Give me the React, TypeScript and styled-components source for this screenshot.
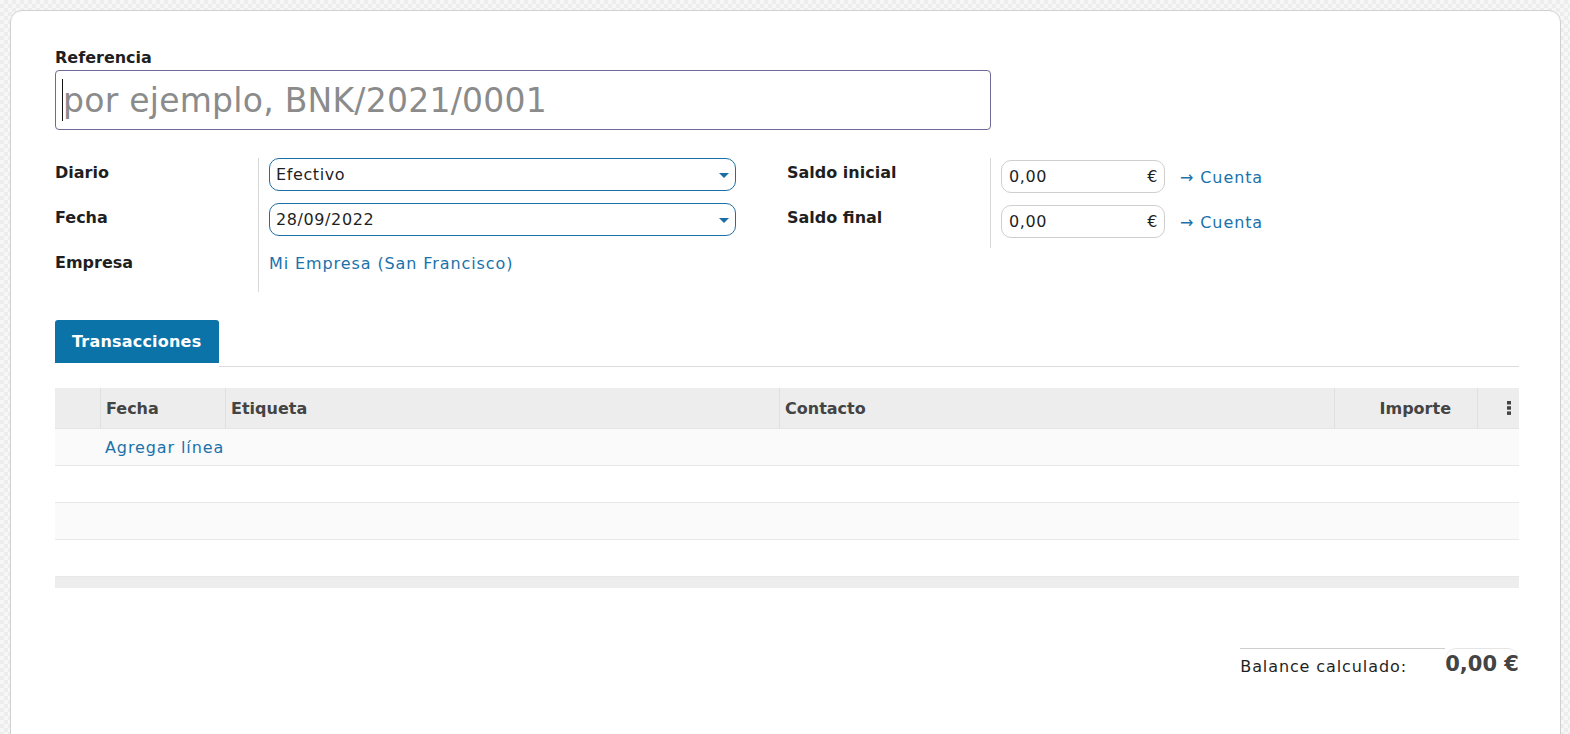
import React from 'react';
import styled, { createGlobalStyle } from 'styled-components';

const GlobalStyle = createGlobalStyle`
  html, body {
    margin: 0;
    padding: 0;
  }
  body {
    font-family: 'DejaVu Sans', 'Noto Sans', sans-serif;
    color: #1f1f1f;
    background-color: #f4f4f4;
    background-image: repeating-conic-gradient(#ededed 0% 25%, #f7f7f7 0% 50%);
    background-size: 8px 8px;
    height: 734px;
    overflow: hidden;
  }
`;

const Page = styled.div`
  padding: 10px 9px 0 10px;
`;

const Sheet = styled.div`
  background: #fff;
  border: 1px solid #cfcfd4;
  border-radius: 12px;
  height: 760px;
  padding: 36px 41px 0 44px;
  box-sizing: border-box;
`;

const TitleLabel = styled.div`
  font-size: 16px;
  font-weight: 700;
  line-height: 22px;
  color: #1f1f1f;
`;

const TitleInput = styled.div`
  margin-top: 1px;
  width: 936px;
  height: 60px;
  border: 1px solid #6d6a99;
  border-radius: 4px;
  box-sizing: border-box;
  display: flex;
  align-items: center;
  padding-left: 6px;
  font-size: 33px;
  color: #8b8b8b;
  letter-spacing: 0.25px;
`;

const Caret = styled.span`
  display: inline-block;
  width: 1px;
  height: 42px;
  background: #111;
`;

const Groups = styled.div`
  display: grid;
  grid-template-columns: 732px 1fr;
  margin-top: 28px;
`;

const Group = styled.div`
  display: grid;
  grid-template-columns: 204px 1fr;
  grid-auto-rows: 45px;
  align-content: start;
`;

const Label = styled.div<{ last?: boolean }>`
  border-right: 1px solid #d8d8d8;
  font-size: 16px;
  font-weight: 700;
  line-height: 29px;
  height: ${({ last }) => (last ? '44px' : '45px')};
  box-sizing: border-box;
`;

const Field = styled.div`
  padding-left: 10px;
  display: flex;
  align-items: flex-start;
  gap: 15px;
`;

const SelectBox = styled.div`
  width: 467px;
  height: 33px;
  border: 1px solid #1b6fa5;
  border-radius: 10px;
  box-sizing: border-box;
  display: flex;
  align-items: center;
  justify-content: space-between;
  padding: 0 6px;
  font-size: 16px;
  letter-spacing: 0.6px;
  color: #1f1f1f;
`;

const Arrow = styled.span`
  width: 0;
  height: 0;
  border-left: 5px solid transparent;
  border-right: 5px solid transparent;
  border-top: 5px solid #1a6ea3;
  margin-top: 2px;
`;

const MoneyBox = styled.div`
  width: 164px;
  height: 33px;
  margin-top: 2px;
  border: 1px solid #cfcfcf;
  border-radius: 10px;
  box-sizing: border-box;
  display: flex;
  align-items: center;
  justify-content: space-between;
  padding: 0 6px 0 7px;
  font-size: 16px;
  letter-spacing: 0.6px;
  color: #1f1f1f;
`;

const Link = styled.a<{ tall?: boolean }>`
  color: #1a72ab;
  font-size: 16px;
  letter-spacing: 0.9px;
  line-height: ${({ tall }) => (tall ? '40px' : '31px')};
  text-decoration: none;
  cursor: pointer;
  white-space: nowrap;
`;

const TabBar = styled.div`
  display: flex;
  margin-top: 27px;
`;

const Tab = styled.div`
  height: 43px;
  padding: 0 18px 0 17px;
  background: #0c73a9;
  color: #fff;
  font-size: 16px;
  font-weight: 700;
  letter-spacing: 0.2px;
  display: flex;
  align-items: center;
  border-radius: 3px 3px 0 0;
`;

const TabRest = styled.div`
  flex: 1;
  height: 46px;
  border-bottom: 1px solid #dcdcdc;
`;

const Table = styled.div`
  margin-top: 21px;
`;

const HeaderRow = styled.div`
  display: grid;
  grid-template-columns: 45px 125px 554px 555px 143px 40px;
  height: 41px;
  background: #ededed;
  border-bottom: 1px solid #e6e6e6;
  box-sizing: border-box;
`;

const HeaderCell = styled.div<{ right?: boolean; sep?: boolean }>`
  display: flex;
  align-items: center;
  justify-content: ${({ right }) => (right ? 'flex-end' : 'flex-start')};
  padding: 0 ${({ right }) => (right ? '26px' : '6px')} 0 5px;
  border-left: ${({ sep }) => (sep ? '1px solid #e0e0e0' : 'none')};
  font-size: 16px;
  font-weight: 700;
  color: #444;
  white-space: nowrap;
`;

const Kebab = styled.div`
  display: flex;
  align-items: center;
  justify-content: flex-end;
  padding-right: 6px;
  border-left: 1px solid #e0e0e0;
`;

const BodyRow = styled.div<{ shade?: boolean }>`
  height: 37px;
  background: ${({ shade }) => (shade ? '#fafafa' : '#fff')};
  border-bottom: 1px solid #e8e8e8;
  box-sizing: border-box;
  display: flex;
  align-items: center;
  padding-left: 50px;
`;

const TableFoot = styled.div`
  height: 11px;
  background: #ededed;
`;

const Summary = styled.div`
  display: flex;
  justify-content: flex-end;
  margin-top: 60px;
`;

const SummaryLabel = styled.div`
  width: 205px;
  border-top: 1px solid #cfcfcf;
  padding-top: 8px;
  font-size: 16px;
  letter-spacing: 0.9px;
  color: #1f1f1f;
  white-space: nowrap;
`;

const SummaryValue = styled.div`
  border-top: 1px solid #e4e4e4;
  border-radius: 12px 12px 0 0;
  padding-top: 3px;
  font-size: 21px;
  font-weight: 700;
  color: #444;
  white-space: nowrap;
`;

const App: React.FC = () => {
  return (
    <Page>
      <GlobalStyle />
      <Sheet>
        <TitleLabel>Referencia</TitleLabel>
        <TitleInput>
          <Caret />
          por ejemplo, BNK/2021/0001
        </TitleInput>

        <Groups>
          <Group>
            <Label>Diario</Label>
            <Field>
              <SelectBox>
                Efectivo
                <Arrow />
              </SelectBox>
            </Field>
            <Label>Fecha</Label>
            <Field>
              <SelectBox>
                28/09/2022
                <Arrow />
              </SelectBox>
            </Field>
            <Label last>Empresa</Label>
            <Field>
              <Link>Mi Empresa (San Francisco)</Link>
            </Field>
          </Group>
          <Group>
            <Label>Saldo inicial</Label>
            <Field>
              <MoneyBox>
                0,00<span>€</span>
              </MoneyBox>
              <Link tall>→ Cuenta</Link>
            </Field>
            <Label>Saldo final</Label>
            <Field>
              <MoneyBox>
                0,00<span>€</span>
              </MoneyBox>
              <Link tall>→ Cuenta</Link>
            </Field>
          </Group>
        </Groups>

        <TabBar>
          <Tab>Transacciones</Tab>
          <TabRest />
        </TabBar>

        <Table>
          <HeaderRow>
            <HeaderCell />
            <HeaderCell sep>Fecha</HeaderCell>
            <HeaderCell sep>Etiqueta</HeaderCell>
            <HeaderCell sep>Contacto</HeaderCell>
            <HeaderCell sep right>Importe</HeaderCell>
            <Kebab>
              <svg width="4" height="14" viewBox="0 0 4 14">
                <rect x="0" y="0" width="4" height="3.5" fill="#444" />
                <rect x="0" y="5.2" width="4" height="3.5" fill="#444" />
                <rect x="0" y="10.4" width="4" height="3.5" fill="#444" />
              </svg>
            </Kebab>
          </HeaderRow>
          <BodyRow shade>
            <Link>Agregar línea</Link>
          </BodyRow>
          <BodyRow />
          <BodyRow shade />
          <BodyRow />
          <TableFoot />
        </Table>

        <Summary>
          <SummaryLabel>Balance calculado:</SummaryLabel>
          <SummaryValue>0,00 €</SummaryValue>
        </Summary>
      </Sheet>
    </Page>
  );
};

export default App;
